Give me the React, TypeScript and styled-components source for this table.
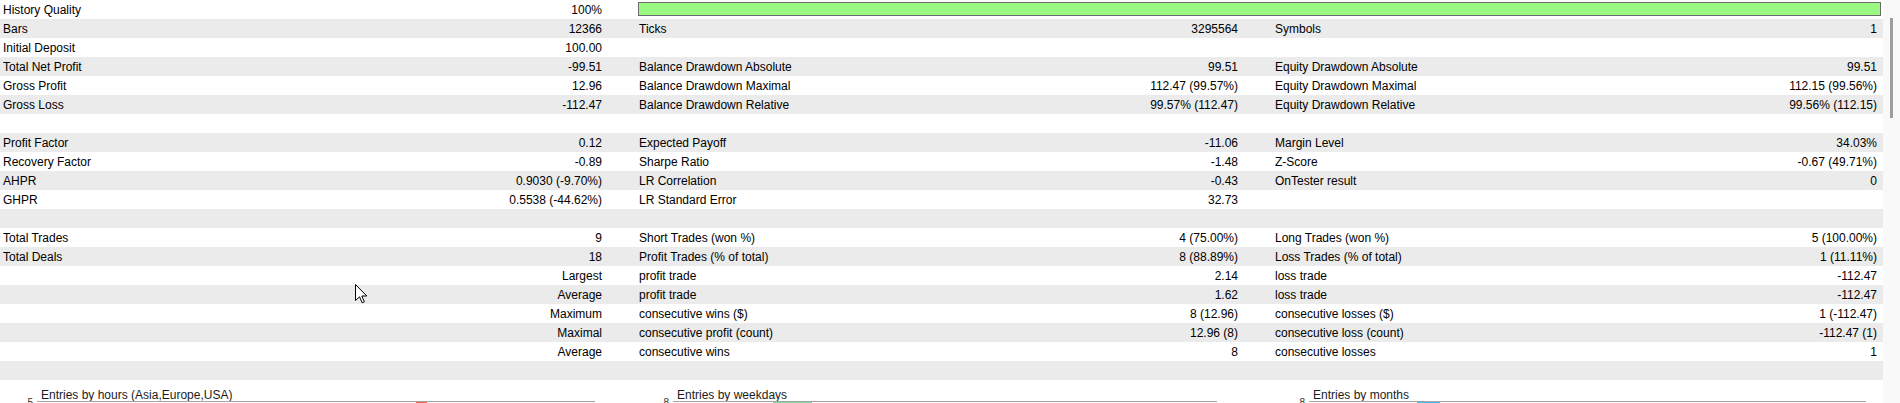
import React from "react";
import styled, { createGlobalStyle } from "styled-components";

const GlobalStyle = createGlobalStyle`
  html, body {
    margin: 0;
    padding: 0;
    background: #ffffff;
    overflow: hidden;
    width: 1900px;
    height: 403px;
  }
  * { box-sizing: border-box; }
`;

const Page = styled.div`
  position: relative;
  display: flex;
  width: 1900px;
  height: 403px;
  overflow: hidden;
  font-family: "Liberation Sans", Arial, sans-serif;
  font-size: 12px;
  color: #000;
  background: #fff;
`;

const Main = styled.div`
  display: flex;
  flex-direction: column;
  width: 1883px;
  flex: none;
`;

const ScrollTrack = styled.div`
  flex: 1;
  background: #f9f9f9;
  padding: 18px 0 0 7px;
`;

const ScrollThumb = styled.div`
  width: 3px;
  height: 100px;
  background: #9d9d9d;
`;

const Table = styled.div`
  display: flex;
  flex-direction: column;
`;

const StatRow = styled.div<{ $alt: boolean }>`
  display: grid;
  grid-template-columns: 605px 605px 608px;
  column-gap: 31px;
  height: 19px;
  padding-top: 1px;
  line-height: 18px;
  background: ${(p) => (p.$alt ? "#ebebeb" : "#ffffff")};
`;

const Cell = styled.div`
  display: flex;
  justify-content: space-between;
  padding: 0 3px;
  white-space: nowrap;
  overflow: hidden;
`;

const Label = styled.span``;
const Value = styled.span`
  margin-left: auto;
`;

const QualityBar = styled.div`
  grid-column: 2 / 4;
  align-self: start;
  margin: 1px -1px 0 2px;
  height: 14px;
  background: #99f983;
  border: 1px solid #6b6b6b;
`;

const Charts = styled.div`
  display: grid;
  grid-template-columns: 636px 636px 611px;
  padding-top: 8px;
`;

const ChartPanel = styled.div`
  display: flex;
  flex-direction: column;
`;

const ChartTitle = styled.div`
  height: 13px;
  line-height: 14px;
  padding-left: 41px;
  color: #1c1c1c;
  white-space: nowrap;
`;

const ChartBody = styled.div`
  display: flex;
`;

const AxisLabel = styled.div`
  width: 37px;
  padding-right: 4px;
  text-align: right;
  font-size: 10px;
  line-height: 12px;
  margin-top: -4px;
  color: #333;
`;

const Plot = styled.div<{ $width: number }>`
  position: relative;
  width: ${(p) => p.$width}px;
  height: 60px;
  border-top: 1px solid #a3a3a3;
`;

const Bar = styled.div<{ $left: number; $width: number; $color: string }>`
  position: absolute;
  top: 0;
  left: ${(p) => p.$left}px;
  width: ${(p) => p.$width}px;
  height: 40px;
  background: ${(p) => p.$color};
`;

const Cursor = styled.svg`
  position: absolute;
  left: 355px;
  top: 284px;
  width: 13px;
  height: 20px;
`;

type C = [string, string] | null;
type Row = { cells: C[]; quality?: boolean };

const rows: Row[] = [
  { cells: [["History Quality", "100%"]], quality: true },
  { cells: [["Bars", "12366"], ["Ticks", "3295564"], ["Symbols", "1"]] },
  { cells: [["Initial Deposit", "100.00"], null, null] },
  {
    cells: [
      ["Total Net Profit", "-99.51"],
      ["Balance Drawdown Absolute", "99.51"],
      ["Equity Drawdown Absolute", "99.51"],
    ],
  },
  {
    cells: [
      ["Gross Profit", "12.96"],
      ["Balance Drawdown Maximal", "112.47 (99.57%)"],
      ["Equity Drawdown Maximal", "112.15 (99.56%)"],
    ],
  },
  {
    cells: [
      ["Gross Loss", "-112.47"],
      ["Balance Drawdown Relative", "99.57% (112.47)"],
      ["Equity Drawdown Relative", "99.56% (112.15)"],
    ],
  },
  { cells: [null, null, null] },
  {
    cells: [
      ["Profit Factor", "0.12"],
      ["Expected Payoff", "-11.06"],
      ["Margin Level", "34.03%"],
    ],
  },
  {
    cells: [
      ["Recovery Factor", "-0.89"],
      ["Sharpe Ratio", "-1.48"],
      ["Z-Score", "-0.67 (49.71%)"],
    ],
  },
  {
    cells: [
      ["AHPR", "0.9030 (-9.70%)"],
      ["LR Correlation", "-0.43"],
      ["OnTester result", "0"],
    ],
  },
  {
    cells: [
      ["GHPR", "0.5538 (-44.62%)"],
      ["LR Standard Error", "32.73"],
      null,
    ],
  },
  { cells: [null, null, null] },
  {
    cells: [
      ["Total Trades", "9"],
      ["Short Trades (won %)", "4 (75.00%)"],
      ["Long Trades (won %)", "5 (100.00%)"],
    ],
  },
  {
    cells: [
      ["Total Deals", "18"],
      ["Profit Trades (% of total)", "8 (88.89%)"],
      ["Loss Trades (% of total)", "1 (11.11%)"],
    ],
  },
  {
    cells: [
      ["", "Largest"],
      ["profit trade", "2.14"],
      ["loss trade", "-112.47"],
    ],
  },
  {
    cells: [
      ["", "Average"],
      ["profit trade", "1.62"],
      ["loss trade", "-112.47"],
    ],
  },
  {
    cells: [
      ["", "Maximum"],
      ["consecutive wins ($)", "8 (12.96)"],
      ["consecutive losses ($)", "1 (-112.47)"],
    ],
  },
  {
    cells: [
      ["", "Maximal"],
      ["consecutive profit (count)", "12.96 (8)"],
      ["consecutive loss (count)", "-112.47 (1)"],
    ],
  },
  {
    cells: [
      ["", "Average"],
      ["consecutive wins", "8"],
      ["consecutive losses", "1"],
    ],
  },
  { cells: [null, null, null] },
];

const charts = [
  { title: "Entries by hours (Asia,Europe,USA)", max: "5", width: 558, bar: { left: 379, width: 11, color: "#f4694f" } },
  { title: "Entries by weekdays", max: "8", width: 544, bar: { left: 100, width: 39, color: "#7fdc9c" } },
  { title: "Entries by months", max: "8", width: 557, bar: { left: 108, width: 23, color: "#45bdf0" } },
];

export default function App() {
  return (
    <>
      <GlobalStyle />
      <Page>
        <Main>
          <Table>
            {rows.map((r, i) => (
              <StatRow key={i} $alt={i % 2 === 1}>
                {r.cells.map((c, j) => (
                  <Cell key={j}>
                    {c && (
                      <>
                        <Label>{c[0]}</Label>
                        <Value>{c[1]}</Value>
                      </>
                    )}
                  </Cell>
                ))}
                {r.quality && <QualityBar />}
              </StatRow>
            ))}
          </Table>
          <Charts>
            {charts.map((ch) => (
              <ChartPanel key={ch.title}>
                <ChartTitle>{ch.title}</ChartTitle>
                <ChartBody>
                  <AxisLabel>{ch.max}</AxisLabel>
                  <Plot $width={ch.width}>
                    <Bar $left={ch.bar.left} $width={ch.bar.width} $color={ch.bar.color} />
                  </Plot>
                </ChartBody>
              </ChartPanel>
            ))}
          </Charts>
        </Main>
        <ScrollTrack>
          <ScrollThumb />
        </ScrollTrack>
        <Cursor viewBox="0 0 13 20">
          <path
            d="M0.5 0.5 L0.5 16.5 L4.5 12.8 L7.2 18.8 L9.4 17.8 L6.8 12 L11.8 12 Z"
            fill="#ffffff"
            stroke="#000000"
            strokeWidth="1"
            strokeLinejoin="miter"
          />
        </Cursor>
      </Page>
    </>
  );
}
